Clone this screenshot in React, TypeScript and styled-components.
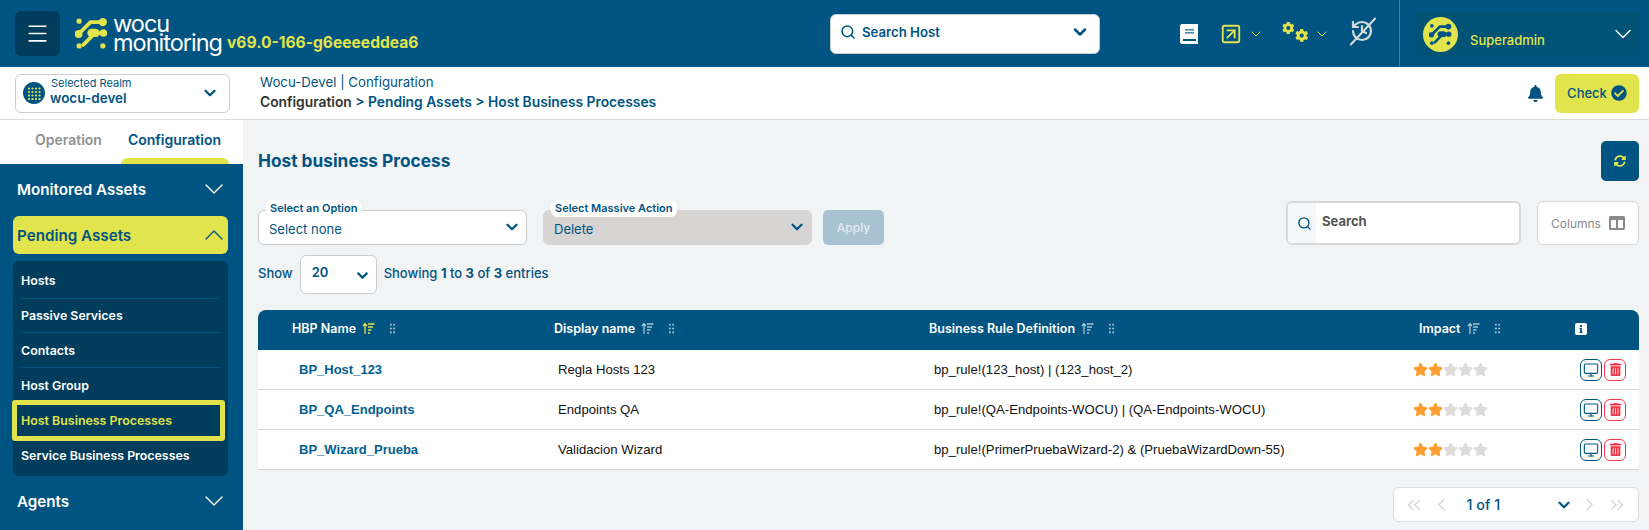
import React from 'react';
import styled, { createGlobalStyle } from 'styled-components';
import {
  ChevronDown,
  ChevronLeft,
  ChevronRight,
  ChevronUp,
  ChevronsLeft,
  ChevronsRight,
  GripVertical,
  History,
  Menu,
  Monitor,
  Search,
  SquareArrowUpRight,
} from 'lucide-react';
import { FaBell, FaCheckCircle, FaCog, FaColumns, FaInfo, FaStar, FaSyncAlt, FaTrashAlt } from 'react-icons/fa';

const BLUE = '#005482';
const DARK = '#003c5c';
const LIME = '#e1e44c';
const UI_FONT = 'Inter, "Noto Sans", sans-serif';

const GlobalStyle = createGlobalStyle`
  html, body {
    margin: 0;
    padding: 0;
    height: 100%;
    overflow: hidden;
  }
  body {
    font-family: ${UI_FONT};
    color: ${BLUE};
    background: #f2f3f5;
  }
  * {
    box-sizing: border-box;
  }
`;

const navItems = ['Hosts', 'Passive Services', 'Contacts', 'Host Group', 'Host Business Processes', 'Service Business Processes'];

const rows = [
  { name: 'BP_Host_123', display: 'Regla Hosts 123', rule: 'bp_rule!(123_host) | (123_host_2)' },
  { name: 'BP_QA_Endpoints', display: 'Endpoints QA', rule: 'bp_rule!(QA-Endpoints-WOCU) | (QA-Endpoints-WOCU)' },
  { name: 'BP_Wizard_Prueba', display: 'Validacion Wizard', rule: 'bp_rule!(PrimerPruebaWizard-2) & (PruebaWizardDown-55)' },
];

function NetworkMark({ size, color }: { size: number; color: string }) {
  return (
    <svg width={size} height={size} viewBox="0 0 32 32" fill="none" stroke={color} strokeLinecap="round" strokeLinejoin="round">
      <path d="M3 17 L15 5 H27" strokeWidth="3.6" />
      <path d="M14 15.5 H27" strokeWidth="3.6" />
      <path d="M16 15.5 H20" strokeWidth="8" />
      <path d="M8 27 L17 18" strokeWidth="3.6" />
      <circle cx="4" cy="4" r="2.5" fill={color} stroke="none" />
      <circle cx="27" cy="5" r="4" fill={color} stroke="none" />
      <circle cx="3.5" cy="16.5" r="3.8" fill={color} stroke="none" />
      <circle cx="27.5" cy="15.5" r="3.7" fill={color} stroke="none" />
      <circle cx="4" cy="28" r="2.5" fill={color} stroke="none" />
      <circle cx="27" cy="28" r="2.5" fill={color} stroke="none" />
    </svg>
  );
}

function DotGrid() {
  const cells = [1, 4.5, 8, 11.5];
  return (
    <svg width="13" height="13" viewBox="0 0 13 13" fill={LIME}>
      {cells.map((y) => cells.map((x) => <circle key={`${x}-${y}`} cx={x} cy={y + 0.5} r="1.1" />))}
    </svg>
  );
}

function BookIcon() {
  return (
    <svg width="18" height="20" viewBox="0 0 18 20">
      <path d="M2 0 H18 V20 H2 C1 20 0 19 0 18 V2 C0 1 1 0 2 0 Z" fill="#fff" />
      <rect x="5" y="5" width="9" height="1.6" fill="#4d87a8" />
      <rect x="5" y="8" width="9" height="1.6" fill="#4d87a8" />
      <rect x="3" y="15" width="13" height="2" fill={BLUE} />
    </svg>
  );
}

function SortIcon({ active }: { active?: boolean }) {
  const color = active ? LIME : '#a9c4d4';
  return (
    <svg width="13" height="13" viewBox="0 0 13 13" fill="none" stroke={color} strokeWidth="1.3">
      <path d="M3 12 V2 M1 4 L3 1.5 L5 4" />
      <path d="M6 2 H12.5 M6 5 H11 M6 8 H9.5 M6 11 H8" />
    </svg>
  );
}

function App() {
  return (
    <Page>
      <GlobalStyle />
      <TopBar>
        <BrandGroup>
          <Burger>
            <Menu size={25} strokeWidth={1.6} />
          </Burger>
          <NetworkMark size={33} color={LIME} />
          <LogoText>
            <span>wocu</span>
            <span>monitoring</span>
          </LogoText>
          <Version>v69.0-166-g6eeeeddea6</Version>
        </BrandGroup>
        <HostSearch>
          <Search size={16} strokeWidth={2.2} />
          <span>Search Host</span>
          <ChevronDown size={20} strokeWidth={3} />
        </HostSearch>
        <TopIcons>
          <BookIcon />
          <TopIconSlot $left={22}>
            <SquareArrowUpRight size={22} strokeWidth={2} color={LIME} />
          </TopIconSlot>
          <TopIconSlot $left={6}>
            <ChevronDown size={16} strokeWidth={1.5} color={LIME} />
          </TopIconSlot>
          <GearPair>
            <FaCog size={14} color={LIME} />
            <FaCog size={15} color={LIME} />
          </GearPair>
          <TopIconSlot $left={6}>
            <ChevronDown size={16} strokeWidth={1.5} color={LIME} />
          </TopIconSlot>
          <MutedHistory>
            <History size={24} strokeWidth={2.2} color="#d5dadd" />
          </MutedHistory>
        </TopIcons>
        <UserBox>
          <UserChip>
            <Avatar>
              <NetworkMark size={23} color={BLUE} />
            </Avatar>
            <UserName>Superadmin</UserName>
            <ChevronDown size={28} strokeWidth={1.2} color="#fff" />
          </UserChip>
        </UserBox>
      </TopBar>

      <SubBar>
        <RealmSelect>
          <RealmBadge>
            <DotGrid />
          </RealmBadge>
          <RealmText>
            <small>Selected Realm</small>
            <strong>wocu-devel</strong>
          </RealmText>
          <ChevronDown size={18} strokeWidth={3} />
        </RealmSelect>
        <Crumbs>
          <CrumbTop>Wocu-Devel | Configuration</CrumbTop>
          <CrumbPath>
            <b>Configuration</b> &gt; Pending Assets &gt; Host Business Processes
          </CrumbPath>
        </Crumbs>
        <FaBell size={17} color={BLUE} />
        <CheckButton>
          Check
          <FaCheckCircle size={16} color={BLUE} />
        </CheckButton>
      </SubBar>

      <Body>
        <Sidebar>
          <Tabs>
            <Tab>Operation</Tab>
            <Tab $active>Configuration</Tab>
          </Tabs>
          <TabMark />
          <Nav>
            <NavGroup>
              Monitored Assets
              <ChevronDown size={32} strokeWidth={1} />
            </NavGroup>
            <NavGroup $open>
              Pending Assets
              <ChevronUp size={32} strokeWidth={1} />
            </NavGroup>
            <SubMenu>
              {navItems.map((item) => (
                <SubItem key={item} $current={item === 'Host Business Processes'}>
                  {item}
                </SubItem>
              ))}
            </SubMenu>
            <NavGroup>
              Agents
              <ChevronDown size={32} strokeWidth={1} />
            </NavGroup>
          </Nav>
        </Sidebar>

        <Main>
          <TitleRow>
            <Title>Host business Process</Title>
            <RefreshButton>
              <FaSyncAlt size={12} color={LIME} />
            </RefreshButton>
          </TitleRow>

          <Toolbar>
            <Field $width={269}>
              <Legend>Select an Option</Legend>
              Select none
              <ChevronDown size={18} strokeWidth={3} />
            </Field>
            <Field $width={269} $disabled>
              <Legend>Select Massive Action</Legend>
              Delete
              <ChevronDown size={18} strokeWidth={3} />
            </Field>
            <ApplyButton>Apply</ApplyButton>
            <TableSearch>
              <SearchAddon>
                <Search size={15} strokeWidth={2.2} />
              </SearchAddon>
              <span>Search</span>
            </TableSearch>
            <ColumnsButton>
              Columns
              <FaColumns size={16} color="#8a8a8a" />
            </ColumnsButton>
          </Toolbar>

          <ShowRow>
            Show
            <PageSize>
              <span>20</span>
              <ChevronDown size={17} strokeWidth={3} />
            </PageSize>
            <span>
              Showing <b>1</b> to <b>3</b> of <b>3</b> entries
            </span>
          </ShowRow>

          <Table>
            <HeadRow>
              <HeadCell $pad={34}>
                HBP Name <SortIcon active /> <Grip size={13} />
              </HeadCell>
              <HeadCell $pad={6}>
                Display name <SortIcon /> <Grip size={13} />
              </HeadCell>
              <HeadCell $pad={17}>
                Business Rule Definition <SortIcon /> <Grip size={13} />
              </HeadCell>
              <HeadCell $pad={13}>
                Impact <SortIcon /> <Grip size={13} />
              </HeadCell>
              <HeadCell $pad={10}>
                <InfoBadge>
                  <FaInfo size={8} color={BLUE} />
                </InfoBadge>
              </HeadCell>
            </HeadRow>
            {rows.map((row) => (
              <Row key={row.name}>
                <NameCell>{row.name}</NameCell>
                <TextCell $pad={10}>{row.display}</TextCell>
                <TextCell $pad={22}>{row.rule}</TextCell>
                <Stars>
                  {[0, 1, 2, 3, 4].map((n) => (
                    <FaStar key={n} size={15} color={n < 2 ? '#ff9d2e' : '#dcdcdc'} />
                  ))}
                </Stars>
                <Actions>
                  <ActionButton $color={BLUE}>
                    <Monitor size={16} strokeWidth={1.7} />
                  </ActionButton>
                  <ActionButton $color="#f0374a">
                    <FaTrashAlt size={13} />
                  </ActionButton>
                </Actions>
              </Row>
            ))}
          </Table>

          <Pagination>
            <ChevronsLeft size={22} strokeWidth={1.4} color="#d2d4d6" />
            <ChevronLeft size={21} strokeWidth={1.4} color="#d2d4d6" />
            <PageLabel>1 of 1</PageLabel>
            <ChevronDown size={18} strokeWidth={3} />
            <ChevronRight size={21} strokeWidth={1.4} color="#d2d4d6" />
            <ChevronsRight size={22} strokeWidth={1.4} color="#d2d4d6" />
          </Pagination>
        </Main>
      </Body>
    </Page>
  );
}

export default App;

const Page = styled.div`
  height: 100vh;
  display: flex;
  flex-direction: column;
`;

const TopBar = styled.header`
  height: 67px;
  flex: none;
  background: ${BLUE};
  display: flex;
  align-items: center;
  padding-left: 15px;
`;

const BrandGroup = styled.div`
  width: 815px;
  display: flex;
  align-items: center;
`;

const Burger = styled.div`
  width: 45px;
  height: 45px;
  border-radius: 6px;
  background: ${DARK};
  color: #fff;
  display: flex;
  align-items: center;
  justify-content: center;
  margin-right: 15px;
`;

const LogoText = styled.div`
  display: flex;
  flex-direction: column;
  margin-left: 5px;
  color: #fff;
  font-size: 23.5px;
  line-height: 19px;
  letter-spacing: -1px;
  padding-bottom: 1px;
`;

const Version = styled.span`
  color: ${LIME};
  font-size: 15.6px;
  font-weight: 700;
  margin-left: 5px;
  align-self: flex-end;
  padding-bottom: 4px;
`;

const HostSearch = styled.div`
  width: 270px;
  height: 40px;
  background: #fff;
  border: 1px solid #c9ced2;
  border-radius: 6px;
  display: flex;
  align-items: center;
  gap: 6px;
  padding: 0 9px 3px;
  font-size: 13.2px;
  font-weight: 600;

  span {
    flex: 1;
  }
`;

const TopIcons = styled.div`
  display: flex;
  align-items: center;
  margin-left: 80px;
  width: 219px;
`;

const TopIconSlot = styled.div<{ $left: number }>`
  display: flex;
  margin-left: ${(p) => p.$left}px;
`;

const GearPair = styled.div`
  width: 26px;
  height: 22px;
  margin-left: 18px;
  margin-top: -4px;
  display: flex;
  justify-content: space-between;

  svg:last-child {
    align-self: flex-end;
  }
`;

const MutedHistory = styled.div`
  display: flex;
  margin-left: 20px;
  margin-top: -6px;
  position: relative;

  &::after {
    content: '';
    position: absolute;
    left: 12px;
    top: -6px;
    width: 2px;
    height: 37px;
    background: #d5dadd;
    transform: rotate(43deg);
  }
`;

const UserBox = styled.div`
  height: 67px;
  flex: 1;
  border-left: 1px solid #3f7d9f;
  padding: 12px 9px 11px 15px;
  display: flex;
`;

const UserChip = styled.div`
  flex: 1;
  border-radius: 8px;
  background: #015376;
  display: flex;
  align-items: center;

  & > svg {
    margin-left: auto;
    margin-right: 3px;
  }
`;

const Avatar = styled.div`
  width: 35px;
  height: 35px;
  border-radius: 50%;
  margin-left: 8px;
  background: ${LIME};
  display: flex;
  align-items: center;
  justify-content: center;
`;

const UserName = styled.span`
  color: ${LIME};
  font-size: 13px;
  font-weight: 500;
  margin: 12px 0 0 12px;
`;

const SubBar = styled.div`
  height: 53px;
  flex: none;
  background: #fff;
  border-bottom: 1px solid #dcdcdc;
  display: flex;
  align-items: center;
  padding: 0 10px 0 15px;
`;

const RealmSelect = styled.div`
  width: 215px;
  height: 39px;
  border: 1px solid #c9ced2;
  border-radius: 6px;
  display: flex;
  align-items: center;
  padding: 0 10px 0 7px;
`;

const RealmBadge = styled.div`
  width: 22px;
  height: 22px;
  border-radius: 50%;
  background: ${BLUE};
  display: flex;
  align-items: center;
  justify-content: center;
  margin-right: 5px;
`;

const RealmText = styled.div`
  flex: 1;
  display: flex;
  flex-direction: column;
  margin-top: -4px;

  small {
    font-size: 11px;
    line-height: 13px;
    padding-left: 1px;
  }

  strong {
    font-size: 13.5px;
    line-height: 16px;
    font-weight: 600;
  }
`;

const Crumbs = styled.div`
  flex: 1;
  margin-left: 30px;
  margin-top: -2px;
`;

const CrumbTop = styled.div`
  font-size: 13.25px;
  line-height: 20px;
`;

const CrumbPath = styled.div`
  font-size: 13.8px;
  line-height: 20px;
  font-weight: 600;

  b {
    color: #333;
    font-weight: 600;
  }
`;

const CheckButton = styled.div`
  width: 84px;
  height: 39px;
  margin-left: 11px;
  border-radius: 6px;
  background: ${LIME};
  font-size: 13px;
  font-weight: 500;
  display: flex;
  align-items: center;
  justify-content: center;
  gap: 4px;
`;

const Body = styled.div`
  flex: 1;
  min-height: 0;
  display: flex;
`;

const Sidebar = styled.aside`
  width: 243px;
  flex: none;
  background: #fff;
  display: flex;
  flex-direction: column;
`;

const Tabs = styled.div`
  height: 38px;
  display: flex;
  align-items: flex-end;
  padding: 0 0 10px 35px;
  gap: 26px;
`;

const Tab = styled.span<{ $active?: boolean }>`
  font-size: 14px;
  font-weight: 600;
  color: ${(p) => (p.$active ? BLUE : '#8f9192')};
`;

const TabMark = styled.div`
  width: 108px;
  height: 6px;
  margin-left: 121px;
  border-radius: 6px 6px 0 0;
  background: ${LIME};
`;

const Nav = styled.nav`
  flex: 1;
  background: ${BLUE};
  padding: 6px 15px 0 13px;
`;

const NavGroup = styled.div<{ $open?: boolean }>`
  height: 38px;
  margin-bottom: ${(p) => (p.$open ? 7 : 8)}px;
  padding: 0 0 0 4px;
  border-radius: 6px;
  display: flex;
  align-items: center;
  justify-content: space-between;
  font-size: 15.2px;
  font-weight: 600;
  color: ${(p) => (p.$open ? BLUE : '#fff')};
  background: ${(p) => (p.$open ? LIME : 'transparent')};

  svg {
    margin-right: -2px;
  }
`;

const SubMenu = styled.div`
  height: 215px;
  margin-bottom: 6px;
  border-radius: 6px;
  background: ${DARK};
  padding: 3px 8px 0;
`;

const SubItem = styled.div<{ $current?: boolean }>`
  height: ${(p) => (p.$current ? 41 : 34.7)}px;
  margin: ${(p) => (p.$current ? '-3px 0 -3px -9px' : '0')};
  padding-left: ${(p) => (p.$current ? 4 : 0)}px;
  width: ${(p) => (p.$current ? 'calc(100% + 14px)' : 'auto')};
  border: ${(p) => (p.$current ? `5px solid ${LIME}` : 'none')};
  border-radius: ${(p) => (p.$current ? 3 : 0)}px;
  display: flex;
  align-items: center;
  font-size: 12.4px;
  font-weight: 600;
  color: ${(p) => (p.$current ? LIME : '#fff')};

  &:nth-child(-n + 3) {
    border-bottom: 1px solid #00557f;
  }
`;

const Main = styled.main`
  flex: 1;
  min-width: 0;
  padding: 21px 10px 0 15px;
  background: #f2f3f5;
`;

const TitleRow = styled.div`
  height: 40px;
  display: flex;
  align-items: center;
  justify-content: space-between;
`;

const Title = styled.h1`
  margin: -2px 0 0;
  font-size: 17.3px;
  font-weight: 700;
`;

const RefreshButton = styled.div`
  width: 38px;
  height: 40px;
  border-radius: 5px;
  background: ${BLUE};
  display: flex;
  align-items: center;
  justify-content: center;
`;

const Toolbar = styled.div`
  height: 44px;
  margin-top: 20px;
  display: flex;
  align-items: flex-end;
`;

const Field = styled.div<{ $width: number; $disabled?: boolean }>`
  position: relative;
  width: ${(p) => p.$width}px;
  height: 35px;
  margin-right: 16px;
  padding: 3px 5px 0 10px;
  border: 1px solid ${(p) => (p.$disabled ? '#d6d5d3' : '#c9ced2')};
  border-radius: 6px;
  background: ${(p) => (p.$disabled ? '#d6d5d3' : '#fff')};
  font-size: 13px;
  display: flex;
  align-items: center;
  justify-content: space-between;

  svg {
    margin-top: -5px;
  }
`;

const Legend = styled.span`
  position: absolute;
  left: 7px;
  top: -11px;
  padding: 0 4px;
  border-radius: 6px;
  background: #fff;
  font-size: 11px;
  line-height: 17px;
  font-weight: 600;
`;

const ApplyButton = styled.div`
  width: 61px;
  height: 35px;
  margin-left: -5px;
  border-radius: 5px;
  background: #a9c2d2;
  color: #e4edf2;
  font-size: 12px;
  font-weight: 500;
  display: flex;
  align-items: center;
  justify-content: center;
`;

const TableSearch = styled.div`
  width: 235px;
  height: 44px;
  margin-left: auto;
  border: 2px solid #d6d8da;
  border-radius: 6px;
  background: #fff;
  color: #555;
  font-size: 13px;
  font-weight: 700;
  display: flex;
  align-items: center;
  gap: 6px;
  overflow: hidden;

  span {
    padding-bottom: 4px;
  }
`;

const SearchAddon = styled.div`
  width: 28px;
  height: 100%;
  background: #f5f7f9;
  color: ${BLUE};
  display: flex;
  align-items: center;
  justify-content: flex-end;
  padding-right: 4px;
`;

const ColumnsButton = styled.div`
  width: 102px;
  height: 44px;
  margin-left: 16px;
  border: 1px solid #d6d8da;
  border-radius: 6px;
  background: #fff;
  color: #8a8a8a;
  font-size: 12px;
  display: flex;
  align-items: center;
  justify-content: center;
  gap: 8px;
`;

const ShowRow = styled.div`
  height: 39px;
  margin-top: 10px;
  padding-bottom: 3px;
  display: flex;
  align-items: center;
  gap: 7px;
  font-size: 13px;
  font-weight: 500;

  b {
    font-weight: 700;
  }
`;

const PageSize = styled.div`
  width: 77px;
  height: 39px;
  padding: 0 5px 5px 11px;
  align-self: flex-start;
  border: 1px solid #c9ced2;
  border-radius: 6px;
  background: #fff;
  font-weight: 600;
  display: flex;
  align-items: center;
  justify-content: space-between;

  svg {
    margin-top: 6px;
  }
`;

const Table = styled.div`
  margin-top: 16px;
`;

const COLUMNS = '290px 364px 494px 159px 74px';

const HeadRow = styled.div`
  height: 40px;
  display: grid;
  grid-template-columns: ${COLUMNS};
  align-items: center;
  background: ${BLUE};
  border-radius: 8px 8px 0 0;
`;

const HeadCell = styled.div<{ $pad: number }>`
  padding: 0 0 3px ${(p) => p.$pad}px;
  display: flex;
  align-items: center;
  gap: 6px;
  color: #fff;
  font-size: 12.5px;
  font-weight: 600;
`;

const Grip = styled(GripVertical)`
  color: #9dbccd;
  margin-left: 5px;
`;

const InfoBadge = styled.span`
  width: 12px;
  height: 12px;
  border-radius: 2px;
  background: #fff;
  display: flex;
  align-items: center;
  justify-content: center;
`;

const Row = styled.div`
  height: 40px;
  display: grid;
  grid-template-columns: ${COLUMNS};
  align-items: center;
  background: #fff;
  border-bottom: 1px solid #d9d9d9;
`;

const NameCell = styled.div`
  padding-left: 41px;
  font-family: 'Liberation Sans', Arial, sans-serif;
  font-size: 13px;
  font-weight: 700;
  color: #005f92;
`;

const TextCell = styled.div<{ $pad: number }>`
  padding-left: ${(p) => p.$pad}px;
  font-family: 'Liberation Sans', Arial, sans-serif;
  font-size: 13.15px;
  color: #111;
`;

const Stars = styled.div`
  padding-left: 7px;
  display: flex;
`;

const Actions = styled.div`
  padding-left: 15px;
  display: flex;
  gap: 2px;
`;

const ActionButton = styled.div<{ $color: string }>`
  width: 22px;
  height: 22px;
  border: 1px solid ${(p) => p.$color};
  border-radius: 6px;
  color: ${(p) => p.$color};
  display: flex;
  align-items: center;
  justify-content: center;
`;

const Pagination = styled.div`
  width: 246px;
  height: 35px;
  margin: 17px 0 0 auto;
  padding: 0 10px 0 9px;
  border: 1px solid #dcdde0;
  border-radius: 6px;
  background: #fff;
  display: flex;
  align-items: center;
  justify-content: space-between;
`;

const PageLabel = styled.span`
  width: 90px;
  font-size: 14.3px;
  font-weight: 500;
  text-align: center;
  padding-right: 40px;
  white-space: nowrap;
`;
